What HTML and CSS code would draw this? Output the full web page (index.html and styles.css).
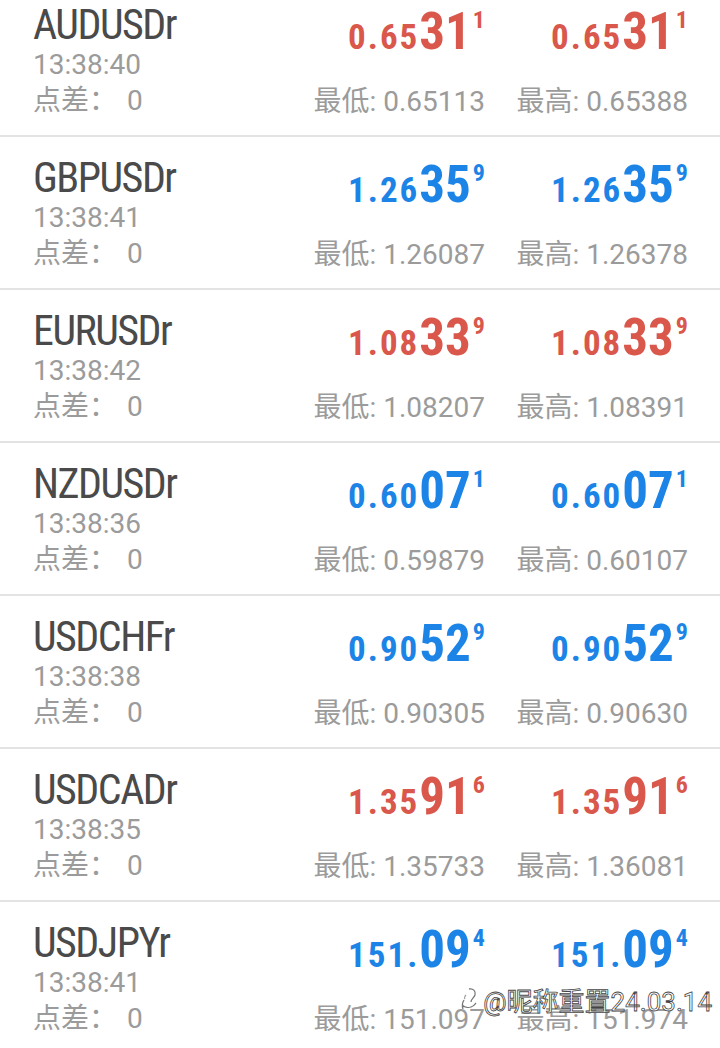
FILE: index.html
```html
<!DOCTYPE html>
<html lang="zh-CN">
<head>
    <meta charset="UTF-8">
    <meta name="viewport" content="width=device-width, initial-scale=1.0">
    <link rel="stylesheet" href="styles.css">
</head>
<body>
    <div class="quotes">
        <div class="row">
            <div class="info">
                <div class="name">AUDUSDr</div>
                <div class="time">13:38:40</div>
                <div class="spread">点差：<span class="pts">0</span></div>
            </div>
            <div class="col">
                <div class="price red"><span class="sm">0.65</span><span class="big">31</span><span class="sup">1</span></div>
                <div class="range">最低: 0.65113</div>
            </div>
            <div class="col">
                <div class="price red"><span class="sm">0.65</span><span class="big">31</span><span class="sup">1</span></div>
                <div class="range">最高: 0.65388</div>
            </div>
        </div>

        <div class="row">
            <div class="info">
                <div class="name">GBPUSDr</div>
                <div class="time">13:38:41</div>
                <div class="spread">点差：<span class="pts">0</span></div>
            </div>
            <div class="col">
                <div class="price blue"><span class="sm">1.26</span><span class="big">35</span><span class="sup">9</span></div>
                <div class="range">最低: 1.26087</div>
            </div>
            <div class="col">
                <div class="price blue"><span class="sm">1.26</span><span class="big">35</span><span class="sup">9</span></div>
                <div class="range">最高: 1.26378</div>
            </div>
        </div>

        <div class="row">
            <div class="info">
                <div class="name">EURUSDr</div>
                <div class="time">13:38:42</div>
                <div class="spread">点差：<span class="pts">0</span></div>
            </div>
            <div class="col">
                <div class="price red"><span class="sm">1.08</span><span class="big">33</span><span class="sup">9</span></div>
                <div class="range">最低: 1.08207</div>
            </div>
            <div class="col">
                <div class="price red"><span class="sm">1.08</span><span class="big">33</span><span class="sup">9</span></div>
                <div class="range">最高: 1.08391</div>
            </div>
        </div>

        <div class="row">
            <div class="info">
                <div class="name">NZDUSDr</div>
                <div class="time">13:38:36</div>
                <div class="spread">点差：<span class="pts">0</span></div>
            </div>
            <div class="col">
                <div class="price blue"><span class="sm">0.60</span><span class="big">07</span><span class="sup">1</span></div>
                <div class="range">最低: 0.59879</div>
            </div>
            <div class="col">
                <div class="price blue"><span class="sm">0.60</span><span class="big">07</span><span class="sup">1</span></div>
                <div class="range">最高: 0.60107</div>
            </div>
        </div>

        <div class="row">
            <div class="info">
                <div class="name">USDCHFr</div>
                <div class="time">13:38:38</div>
                <div class="spread">点差：<span class="pts">0</span></div>
            </div>
            <div class="col">
                <div class="price blue"><span class="sm">0.90</span><span class="big">52</span><span class="sup">9</span></div>
                <div class="range">最低: 0.90305</div>
            </div>
            <div class="col">
                <div class="price blue"><span class="sm">0.90</span><span class="big">52</span><span class="sup">9</span></div>
                <div class="range">最高: 0.90630</div>
            </div>
        </div>

        <div class="row">
            <div class="info">
                <div class="name">USDCADr</div>
                <div class="time">13:38:35</div>
                <div class="spread">点差：<span class="pts">0</span></div>
            </div>
            <div class="col">
                <div class="price red"><span class="sm">1.35</span><span class="big">91</span><span class="sup">6</span></div>
                <div class="range">最低: 1.35733</div>
            </div>
            <div class="col">
                <div class="price red"><span class="sm">1.35</span><span class="big">91</span><span class="sup">6</span></div>
                <div class="range">最高: 1.36081</div>
            </div>
        </div>

        <div class="row">
            <div class="info">
                <div class="name">USDJPYr</div>
                <div class="time">13:38:41</div>
                <div class="spread">点差：<span class="pts">0</span></div>
            </div>
            <div class="col">
                <div class="price blue"><span class="sm">151.</span><span class="big">09</span><span class="sup">4</span></div>
                <div class="range">最低: 151.097</div>
            </div>
            <div class="col">
                <div class="price blue"><span class="sm">151.</span><span class="big">09</span><span class="sup">4</span></div>
                <div class="range">最高: 151.974</div>
            </div>
        </div>
    </div>

    <div class="watermark">
        <svg class="wb-logo" width="20" height="28" viewBox="0 0 20 28">
            <path d="M9 3c4-1 7 2 6 6-1 3-4 4-4 7" fill="none" stroke="#777" stroke-width="1.3"/>
            <path d="M4 14c-2 3-2 6-1 9M2 19c2 2 6 3 9 2 3-1 4-3 5-4" fill="none" stroke="#777" stroke-width="1.3"/>
            <path d="M6 9c-1 1-2 3-1 4" fill="none" stroke="#999" stroke-width="1.1"/>
        </svg>
        <span>@昵称重置24.03.14</span>
    </div>
</body>
</html>
```

FILE: styles.css
```css
body {
    margin: 0;
    overflow: hidden;
    background-color: #fff;
    font-family: Roboto, "Noto Sans CJK SC", sans-serif;
}

.quotes {
    margin-top: -16px;
}

.row {
    display: grid;
    grid-template-columns: 1fr 203px 203px;
    padding: 0 32px 0 33px;
    height: 151px;
    border-bottom: 2px solid #e3e3e3;
}

/* left block */
.info {
    padding-top: 19px;
}

.name {
    font-size: 42px;
    line-height: 44px;
    color: #4a4a4a;
    font-stretch: 75%;
    letter-spacing: -1.5px;
}

.time,
.spread {
    font-size: 28px;
    line-height: 36px;
    color: #9b9b9b;
}

.pts {
    margin-left: 10px;
}

/* price columns */
.col {
    text-align: right;
}

.price {
    padding-top: 18px;
    font-size: 51px;
    line-height: 60px;
    font-weight: 700;
    font-stretch: 75%;
    white-space: nowrap;
}

.price span {
    line-height: 1;
}

.sm {
    font-size: 35px;
    letter-spacing: 2px;
}

.sup {
    font-size: 24px;
    vertical-align: 21px;
    margin-left: 2px;
}

.red  { color: #d9574b; }
.blue { color: #1c84e6; }

.range {
    margin-top: 22px;
    font-size: 28px;
    line-height: 36px;
    color: #9b9b9b;
    white-space: nowrap;
}

.watermark {
    position: absolute;
    right: 8px;
    top: 981px;
    display: flex;
    align-items: center;
    gap: 3px;
    font-size: 26px;
    color: #fff;
    -webkit-text-stroke: 0.8px #444;
}
```
